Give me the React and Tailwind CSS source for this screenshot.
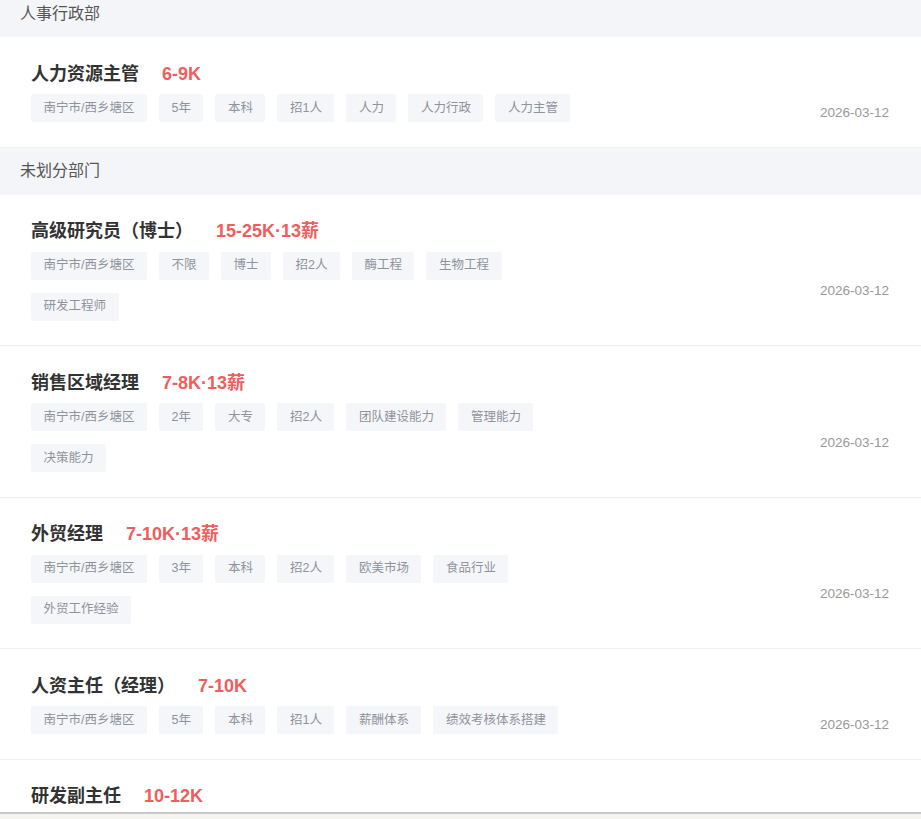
const SECTIONS = [
  {
    name: '人事行政部',
    jobs: [
      { title: '人力资源主管', salary: '6-9K', tags: ['南宁市/西乡塘区', '5年', '本科', '招1人', '人力', '人力行政', '人力主管'], date: '2026-03-12' },
    ],
  },
  {
    name: '未划分部门',
    jobs: [
      { title: '高级研究员（博士）', salary: '15-25K·13薪', tags: ['南宁市/西乡塘区', '不限', '博士', '招2人', '酶工程', '生物工程', '研发工程师'], date: '2026-03-12' },
      { title: '销售区域经理', salary: '7-8K·13薪', tags: ['南宁市/西乡塘区', '2年', '大专', '招2人', '团队建设能力', '管理能力', '决策能力'], date: '2026-03-12' },
      { title: '外贸经理', salary: '7-10K·13薪', tags: ['南宁市/西乡塘区', '3年', '本科', '招2人', '欧美市场', '食品行业', '外贸工作经验'], date: '2026-03-12' },
      { title: '人资主任（经理）', salary: '7-10K', tags: ['南宁市/西乡塘区', '5年', '本科', '招1人', '薪酬体系', '绩效考核体系搭建'], date: '2026-03-12' },
      { title: '研发副主任', salary: '10-12K', tags: [], date: '' },
    ],
  },
]

function JobItem({ job }) {
  return (
    <div className="flex border-b border-[#f2f2f2] bg-white pl-[31px] pr-[32px] pt-[25px] pb-[11.5px]">
      <div className="flex-1 min-w-0">
        <div className="flex items-center h-[24px] mb-[8px]">
          <span className="text-[18px] font-bold text-[#333]">{job.title}</span>
          <span className="ml-[23px] text-[18px] font-bold text-[#f15c5c]">{job.salary}</span>
        </div>
        <div className="flex flex-wrap gap-x-[12px] max-w-[560px]">
          {job.tags.map((t, i) => (
            <span key={i} className="mb-[13px] h-[28px] px-[12.5px] flex items-center rounded-[2px] bg-[#f5f6f9] text-[12.5px] text-[#8e939c]">{t}</span>
          ))}
        </div>
      </div>
      <div className="flex items-center pt-[30px]">
        <span className="text-[13.5px] text-[#999]">{job.date}</span>
      </div>
    </div>
  )
}

export default function App() {
  return (
    <div className="h-[819px] flex flex-col overflow-hidden bg-white" style={{ fontFamily: '"Liberation Sans", "Noto Sans CJK SC", sans-serif' }}>
      <div className="h-[812px] overflow-hidden">
        <div className="-mt-[10px]">
          {SECTIONS.map((s) => (
            <div key={s.name}>
              <div className="h-[47px] flex items-center px-[20px] bg-[#f4f5f8] text-[16px] text-[#555]">{s.name}</div>
              {s.jobs.map((j) => (
                <JobItem key={j.title} job={j} />
              ))}
            </div>
          ))}
        </div>
      </div>
      <div className="flex-1 border-t-2 border-[#c8c8c8] bg-[#f6f4ef]" />
    </div>
  )
}
